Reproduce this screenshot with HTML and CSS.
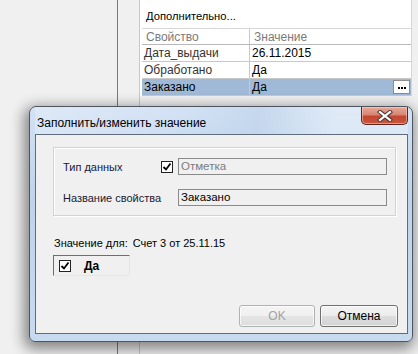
FILE: index.html
```html
<!DOCTYPE html>
<html lang="ru">
<head>
<meta charset="utf-8">
<link rel="stylesheet" href="styles.css">
</head>
<body>
<div class="screen">
  <div class="pane-left"></div>
  <div class="sep sep-dark"></div>
  <div class="pane-mid"></div>
  <div class="sep sep-light"></div>
  <div class="props">
    <div class="props-panel">
      <div class="props-title">Дополнительно...</div>
      <div class="grid">
        <div class="grow head"><div class="c1">Свойство</div><div class="c2">Значение</div></div>
        <div class="grow"><div class="c1">Дата_выдачи</div><div class="c2">26.11.2015</div></div>
        <div class="grow"><div class="c1">Обработано</div><div class="c2">Да</div></div>
        <div class="grow sel"><div class="c1">Заказано</div><div class="c2"><span>Да</span><span class="dots"><i></i><i></i><i></i></span></div></div>
      </div>
    </div>
  </div>

  <div class="window">
    <div class="titlebar">
      <span class="title">Заполнить/изменить значение</span>
      <span class="close">
        <svg width="16" height="12" viewBox="0 0 16 12">
          <path d="M3 2 L13 10 M13 2 L3 10" stroke="#4a3a3a" stroke-width="4.2" stroke-linecap="square" fill="none"/>
          <path d="M3 2 L13 10 M13 2 L3 10" stroke="#ffffff" stroke-width="2.2" stroke-linecap="square" fill="none"/>
        </svg>
      </span>
    </div>
    <div class="client">
      <div class="group">
        <div class="frow">
          <span class="flabel">Тип данных</span>
          <span class="chk"><svg width="10" height="10" viewBox="0 0 10 10"><path d="M1.5 5 L4 7.5 L8.5 1.5" stroke="#000" stroke-width="1.8" fill="none"/></svg></span>
          <span class="field disabled">Отметка</span>
        </div>
        <div class="frow">
          <span class="flabel">Название свойства</span>
          <span class="field">Заказано</span>
        </div>
      </div>
      <div class="valfor"><span>Значение для:</span><span>Счет 3 от 25.11.15</span></div>
      <div class="valbox">
        <span class="chk"><svg width="10" height="10" viewBox="0 0 10 10"><path d="M1.5 5 L4 7.5 L8.5 1.5" stroke="#000" stroke-width="1.8" fill="none"/></svg></span>
        <span class="valtext">Да</span>
      </div>
      <div class="spacer"></div>
      <div class="buttons">
        <span class="btn btn-disabled">OK</span>
        <span class="btn">Отмена</span>
      </div>
    </div>
  </div>
</div>
</body>
</html>
```

FILE: styles.css
```css
* { box-sizing: border-box; }
html, body { margin: 0; padding: 0; }
body {
  font-family: "Liberation Sans", "DejaVu Sans", Arial, sans-serif;
  font-size: 12px;
  color: #000;
  background: #f0f0f0;
}
.screen {
  position: relative;
  width: 418px;
  height: 354px;
  display: flex;
  overflow: hidden;
  background: #f0f0f0;
}
.pane-left { width: 117px; }
.pane-mid { width: 21px; }
.sep { width: 1px; }
.sep-dark { background: #7a7a7a; }
.sep-light { background: #c8c8c8; }
.props { flex: 1; }
.props-panel {
  width: 272px;
  height: 96px;
  background: #fff;
  border-right: 1px solid #d6d6d6;
}
.props-title {
  height: 28px;
  padding: 9px 0 0 6px;
  line-height: 14px;
  font-size: 11.2px;
}
.grid { margin-left: 2px; width: 269px; }
.grow {
  display: flex;
  height: 17px;
  border-bottom: 1px solid #c9c9c9;
  line-height: 16px;
}
.grow.head {
  height: 17px;
  border-top: 1px solid #d8d8d8;
  border-bottom: 1px solid #b8b8b8;
  color: #7a7a7a;
}
.c1 {
  width: 108px;
  padding-left: 2px;
  border-right: 1px solid #c9c9c9;
  color: #333;
}
.head .c1 { color: #7a7a7a; padding-left: 4px; }
.head .c2 { padding-left: 4px; }
.c2 {
  flex: 1;
  padding-left: 2px;
  display: flex;
  justify-content: space-between;
  align-items: center;
}
.grow.sel { background: #9fb9d7; }
.grow.sel .c1 { color: #000; }
.dots {
  width: 17px;
  height: 14px;
  background: #fff;
  border: 1px solid #8d8d8d;
  margin-right: 1px;
  display: flex;
  align-items: center;
  justify-content: center;
  gap: 1px;
  padding-top: 1px;
}
.dots i {
  display: block;
  width: 2px;
  height: 2px;
  background: #000;
}

/* dialog window */
.window {
  position: absolute;
  left: 29px;
  top: 106px;
  width: 384px;
  height: 236px;
  border: 1px solid #4e5560;
  border-radius: 7px 7px 6px 6px;
  background: linear-gradient(180deg, #d3e2f4 0%, #bfd3ec 40%, #c7daf0 100%);
  box-shadow: -2px 4px 14px 3px rgba(0,0,0,0.45);
  display: flex;
  flex-direction: column;
  padding: 0 4px 7px 5px;
}
.titlebar {
  height: 27px;
  display: flex;
  align-items: flex-start;
  justify-content: space-between;
  background: linear-gradient(100deg, rgba(255,255,255,0.25) 0%, rgba(255,255,255,0) 40%, rgba(170,195,225,0.3) 60%, rgba(255,255,255,0.3) 80%);
}
.title {
  padding: 9px 0 0 2px;
  line-height: 14px;
  font-size: 12px;
  color: #000;
}
.close {
  width: 47px;
  height: 18px;
  border: 1px solid #5b2520;
  border-top: none;
  border-radius: 0 0 5px 5px;
  background: linear-gradient(180deg, #e8a899 0%, #d98573 45%, #c24630 55%, #c9583c 100%);
  display: flex;
  align-items: center;
  justify-content: center;
  box-shadow: inset 0 0 0 1px rgba(255,220,210,0.5);
}
.close svg { display: block; }
.client {
  flex: 1;
  background: #f0f0f0;
  border: 1px solid #5f6c7c;
  display: flex;
  flex-direction: column;
  padding: 12px 11px 6px 17px;
  font-size: 11px;
}
.group {
  width: 343px;
  height: 69px;
  border: 1px solid #cdd3d8;
  box-shadow: inset 1px 1px 0 #fff, 1px 1px 0 #fff;
  padding: 10px 8px 0 9px;
  display: flex;
  flex-direction: column;
  gap: 14px;
}
.frow {
  display: flex;
  align-items: center;
  height: 17px;
}
.flabel { flex: 1; color: #1a1a33; }
.chk {
  width: 12px;
  height: 12px;
  border: 1px solid #222;
  background: #fff;
  display: flex;
  align-items: center;
  justify-content: center;
}
.chk svg { display: block; }
.frow .chk { margin-right: 5px; }
.field {
  width: 209px;
  height: 17px;
  border: 1px solid #8a8a8a;
  background: #f0f0f0;
  padding-left: 2px;
  line-height: 15px;
  font-size: 11.5px;
}
.field.disabled { color: #7c7c7c; }
.valfor {
  margin-top: 20px;
  padding-left: 1px;
  display: flex;
  gap: 5px;
  line-height: 14px;
}
.valbox {
  margin-top: 5px;
  width: 77px;
  height: 21px;
  border: 1px solid #6e6e6e;
  border-right-color: #e6e6e6;
  border-bottom-color: #e6e6e6;
  display: flex;
  align-items: center;
  padding-left: 5px;
}
.valtext {
  font-weight: bold;
  font-size: 12px;
  margin-left: 13px;
}
.spacer { flex: 1; }
.buttons {
  display: flex;
  justify-content: flex-end;
  gap: 5px;
  margin-right: -2px;
}
.btn {
  width: 78px;
  height: 22px;
  border: 1px solid #707070;
  border-radius: 3px;
  background: linear-gradient(180deg, #f3f3f3 0%, #ececec 48%, #dddddd 52%, #d3d3d3 100%);
  box-shadow: inset 0 0 0 1px rgba(255,255,255,0.7);
  display: flex;
  align-items: center;
  justify-content: center;
  font-size: 12px;
}
.btn-disabled {
  width: 76px;
  color: #a3a3a3;
  border-color: #adb2b5;
  background: linear-gradient(180deg, #f4f4f4 0%, #f0f0f0 48%, #e4e4e4 52%, #dedede 100%);
}
```
